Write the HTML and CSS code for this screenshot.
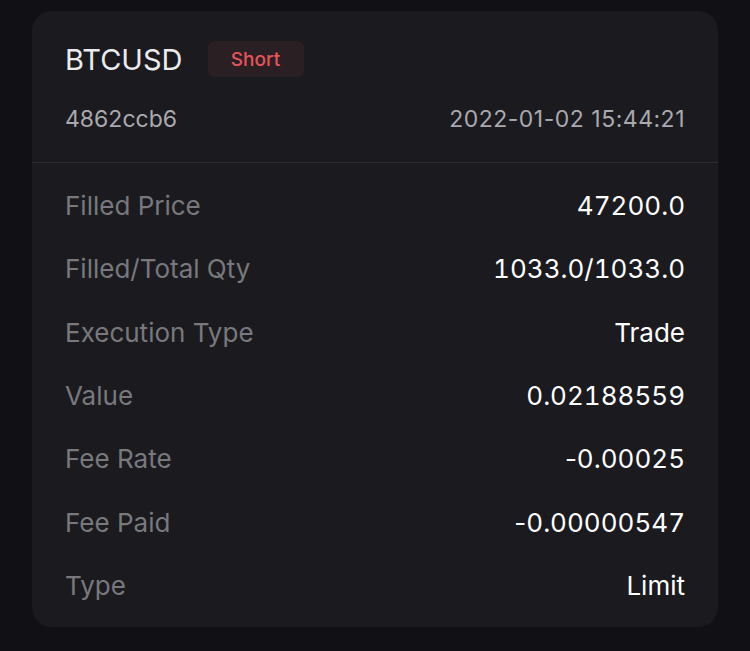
FILE: index.html
```html
<!DOCTYPE html>
<html>
<head>
<meta charset="utf-8">
<link rel="stylesheet" href="styles.css">
</head>
<body>
<div class="card">
  <div class="head">
    <div class="title-row">
      <span class="symbol">BTCUSD</span>
      <span class="badge">Short</span>
    </div>
    <div class="meta-row">
      <span>4862ccb6</span>
      <span class="date">2022-01-02 15:44:21</span>
    </div>
  </div>
  <div class="rows">
    <div class="row"><span class="label">Filled Price</span><span class="value">47200.0</span></div>
    <div class="row"><span class="label">Filled/Total Qty</span><span class="value">1033.0/1033.0</span></div>
    <div class="row"><span class="label">Execution Type</span><span class="value">Trade</span></div>
    <div class="row"><span class="label">Value</span><span class="value">0.02188559</span></div>
    <div class="row"><span class="label">Fee Rate</span><span class="value"><span class="sign">-</span>0.00025</span></div>
    <div class="row"><span class="label">Fee Paid</span><span class="value"><span class="sign">-</span>0.00000547</span></div>
    <div class="row"><span class="label">Type</span><span class="value">Limit</span></div>
  </div>
</div>
</body>
</html>
```
FILE: styles.css
```css
html, body { margin: 0; padding: 0; }
body {
  background: #111115;
  font-family: "Inter", "Liberation Sans", sans-serif;
  width: 750px;
  height: 651px;
  padding: 11px 32px 0;
  box-sizing: border-box;
}
.card {
  background: #1b1b1f;
  border-radius: 20px;
  height: 616px;
  box-sizing: border-box;
}
.head {
  padding: 30px 33px 0 33px;
  height: 152px;
  box-sizing: border-box;
  border-bottom: 1px solid #2c2c31;
}
.title-row {
  display: flex;
  align-items: center;
  gap: 25px;
  height: 36px;
}
.symbol {
  color: #ebebee;
  font-size: 29px;
}
.badge {
  background: #2a1f22;
  color: #e5545b;
  font-size: 19px;
  border-radius: 6px;
  height: 36px;
  width: 96px;
  display: flex;
  align-items: center;
  justify-content: center;
  font-weight: 500;
}
.meta-row {
  display: flex;
  justify-content: space-between;
  margin-top: 28px;
  color: #a9a9ae;
  font-size: 23px;
}
.date { letter-spacing: 0.5px; }
.rows {
  padding: 11px 33px 0;
}
.row {
  display: flex;
  justify-content: space-between;
  align-items: center;
  height: 63.3px;
  font-size: 26px;
}
.label { color: #78787d; }
.value { color: #ffffff; font-feature-settings: "tnum"; }
.sign { font-feature-settings: normal; }
```
